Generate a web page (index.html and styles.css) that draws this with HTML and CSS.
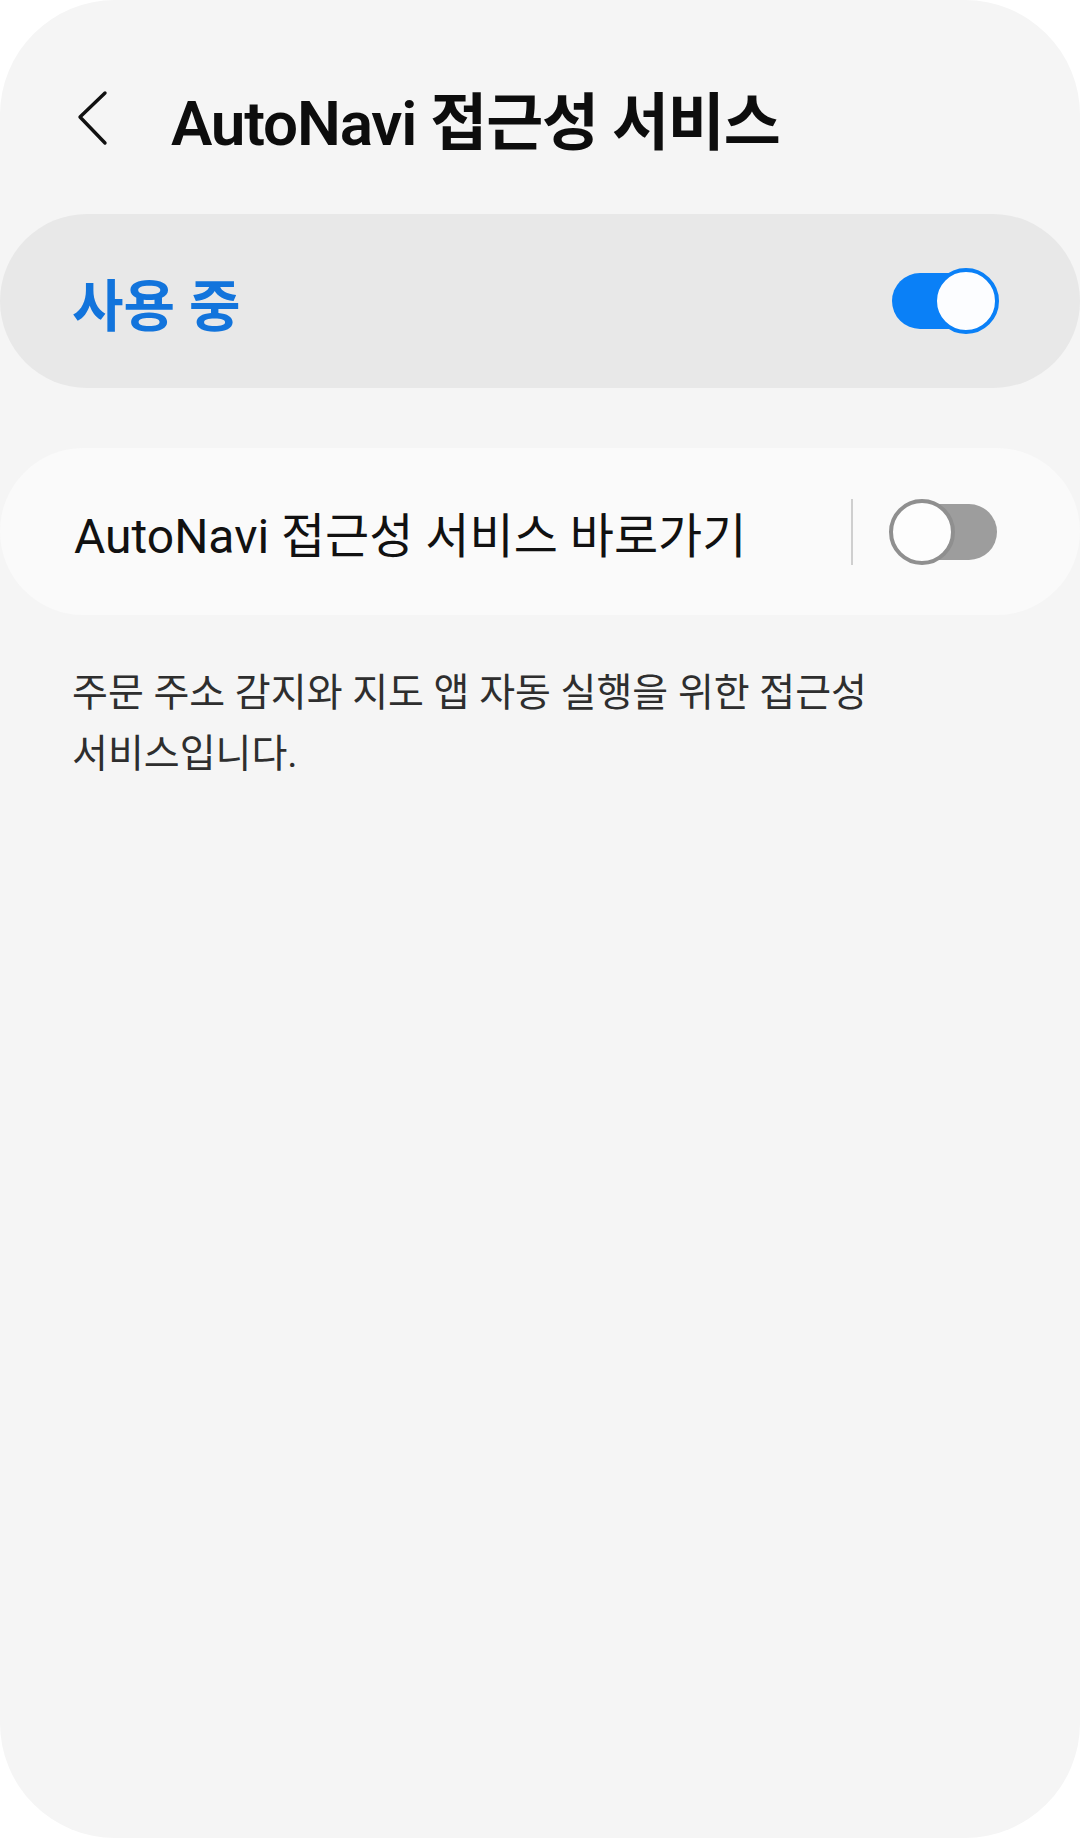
FILE: index.html
```html
<!DOCTYPE html>
<html lang="ko">
<head>
    <meta charset="UTF-8" />
    <meta name="viewport" content="width=device-width, initial-scale=1.0" />
    <title>AutoNavi 접근성 서비스</title>
    <link rel="stylesheet" href="styles.css">
</head>
<body>

    <div class="screen">
        <header class="top-bar">
            <button class="back-btn" aria-label="뒤로">
                <svg width="32" height="56" viewBox="0 0 32 56">
                    <path d="M28 3 L3 27 L28 53" fill="none" stroke="#111" stroke-width="3.4" stroke-linecap="round" stroke-linejoin="round" />
                </svg>
            </button>
            <h1>AutoNavi 접근성 서비스</h1>
        </header>

        <section class="master-switch">
            <span class="master-label">사용 중</span>
            <span class="toggle on"></span>
        </section>

        <section class="item-card">
            <span class="item-label">AutoNavi 접근성 서비스 바로가기</span>
            <span class="item-divider"></span>
            <span class="toggle off"></span>
        </section>

        <p class="description">주문 주소 감지와 지도 앱 자동 실행을 위한 접근성<br>서비스입니다.</p>
    </div>

</body>
</html>
```

FILE: styles.css
```css
body {
    margin: 0;
    padding: 0;
    background: #ffffff;
    font-family: Roboto, "Noto Sans CJK KR", sans-serif;
    color: #111;
}

.screen {
    height: 1838px;
    background: #f5f5f5;
    border-radius: 115px;
    overflow: hidden;
}

.top-bar {
    display: flex;
    align-items: center;
    height: 116px;
    padding: 60px 0 0 77px;
}

.back-btn {
    display: flex;
    align-items: center;
    padding: 0;
    border: none;
    background: none;
    width: 94px;
}

h1 {
    margin: 0;
    font-size: 62px;
    font-weight: 600;
    letter-spacing: -1.2px;
    color: #0d0d0d;
}

.master-switch {
    display: flex;
    align-items: center;
    justify-content: space-between;
    height: 174px;
    margin-top: 38px;
    padding: 0 81px 0 72px;
    background: #e8e8e8;
    border-radius: 87px;
}

.master-label {
    font-size: 56px;
    font-weight: 700;
    color: #1274dc;
}

.item-card {
    display: flex;
    align-items: center;
    height: 167px;
    margin-top: 60px;
    padding: 0 81px 0 74px;
    background: #fafafa;
    border-radius: 84px;
}

.item-label {
    flex: 1;
    font-size: 48px;
    font-weight: 400;
    color: #111;
}

.item-divider {
    width: 2px;
    height: 66px;
    background: #cfcfcf;
    margin-right: 36px;
}

.toggle {
    position: relative;
    width: 110px;
    height: 66px;
    display: block;
}

.toggle::before {
    content: "";
    position: absolute;
    top: 5px;
    left: 3px;
    right: 2px;
    height: 56px;
    border-radius: 28px;
}

.toggle::after {
    content: "";
    position: absolute;
    top: 0;
    width: 58px;
    height: 58px;
    border-radius: 50%;
    background: #fcfdff;
}

.toggle.on::before {
    background: #0a80f7;
}

.toggle.on::after {
    right: 0;
    border: 4px solid #0a80f7;
}

.toggle.off::before {
    background: #9d9d9d;
}

.toggle.off::after {
    left: 0;
    border: 4px solid #8f8f8f;
    background: #fdfdfd;
}

.description {
    margin: 48px 0 0 0;
    padding: 0 72px;
    font-size: 39px;
    line-height: 61px;
    color: #2e2e2e;
}
```
